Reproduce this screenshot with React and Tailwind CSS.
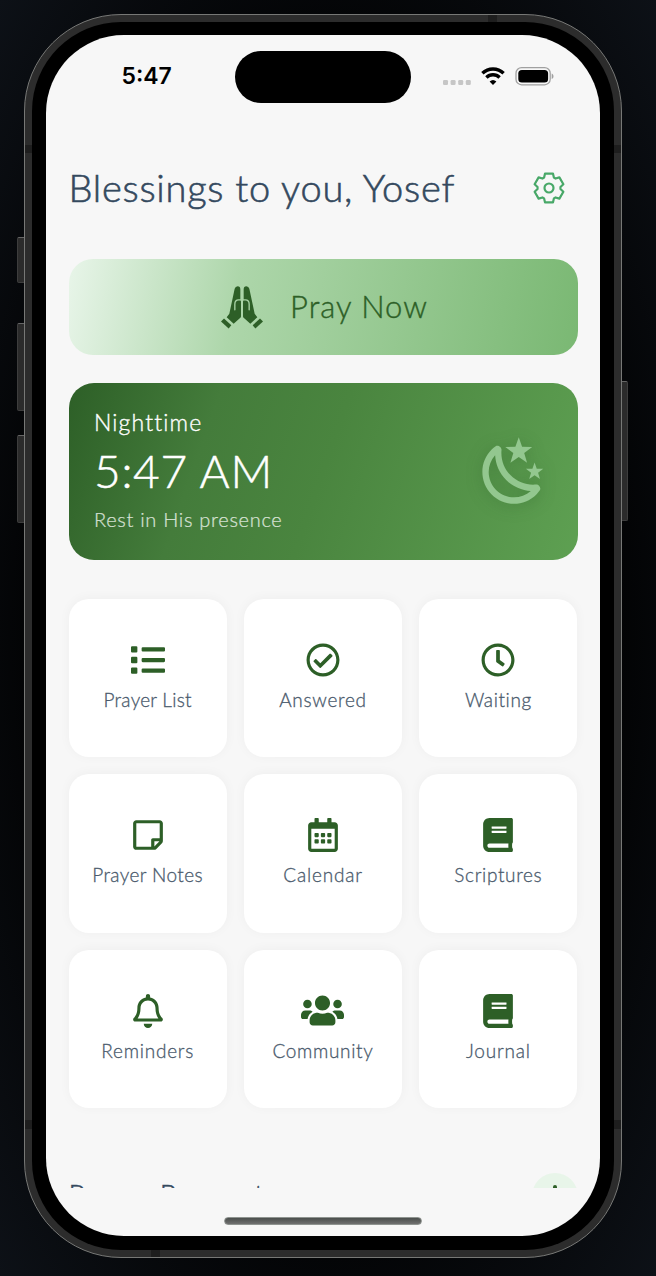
import { FaList, FaRegCheckCircle, FaRegClock, FaRegStickyNote, FaRegCalendarAlt, FaBook, FaRegBell, FaUsers } from 'react-icons/fa';

const tiles = [
  { label: 'Prayer List', Icon: FaList, tracking: 'tracking-[0.25px]' },
  { label: 'Answered', Icon: FaRegCheckCircle, tracking: 'tracking-[0.7px]' },
  { label: 'Waiting', Icon: FaRegClock, tracking: 'tracking-[0.6px]' },
  { label: 'Prayer Notes', Icon: FaRegStickyNote, tracking: 'tracking-[0.4px]' },
  { label: 'Calendar', Icon: FaRegCalendarAlt, tracking: 'tracking-[0.8px]' },
  { label: 'Scriptures', Icon: FaBook, tracking: 'tracking-[0.65px]' },
  { label: 'Reminders', Icon: FaRegBell, tracking: 'tracking-[0.75px]' },
  { label: 'Community', Icon: FaUsers, tracking: 'tracking-[0.65px]', wide: true },
  { label: 'Journal', Icon: FaBook, tracking: 'tracking-[0.8px]' },
];

const tooth = [[-4.9, -10.4], [-4, -14.3], [4, -14.3], [4.9, -10.4]];
const gearPoints = [0, 1, 2, 3, 4, 5]
  .flatMap((i) => {
    const a = (i * Math.PI) / 3;
    return tooth.map(([x, y]) => `${(x * Math.cos(a) - y * Math.sin(a)).toFixed(2)},${(x * Math.sin(a) + y * Math.cos(a)).toFixed(2)}`);
  })
  .join(' ');

function GearIcon() {
  return (
    <svg viewBox="-19 -19 38 38" className="h-[38px] w-[38px] fill-none stroke-[#48a868]" strokeWidth="2.2" strokeLinejoin="round">
      <polygon points={gearPoints} />
      <circle r="4.5" />
    </svg>
  );
}

function Hand() {
  return (
    <g>
      <path fill="currentColor" d="M41 8Q43 0 50 0Q58 0 58 9V40L60 46V90Q60 93 58 95L38 113L17 93L25 83Z" />
      <path fill="none" stroke="#a9d4a6" strokeWidth="4" strokeLinecap="round" d="M41.500 71V54Q41.500 41 53 41H62" />
      <path fill="currentColor" d="M0 106L9 97L31 117L23 127Z" />
    </g>
  );
}

function PrayIcon() {
  return (
    <svg viewBox="0 0 126 128" className="h-[43px] w-[42px]">
      <Hand />
      <g transform="translate(126 0) scale(-1 1)"><Hand /></g>
    </svg>
  );
}

function NightIcon() {
  return (
    <svg viewBox="0 0 24 24" className="h-[76px] w-[76px] fill-[#93c78f] [filter:drop-shadow(0_2px_8px_rgba(30,80,30,0.3))]">
      <path d="M17.75,4.09L15.22,6.03L16.13,9.09L13.5,7.28L10.87,9.09L11.78,6.03L9.25,4.09L12.44,4L13.5,1L14.56,4L17.75,4.09M21.25,11L19.61,12.25L20.2,14.23L18.5,13.06L16.8,14.23L17.39,12.25L15.75,11L17.81,10.95L18.5,9L19.19,10.95L21.25,11M18.97,15.95C19.8,15.87 20.69,17.05 20.16,17.8C19.84,18.25 19.5,18.67 19.08,19.07C15.17,23 8.84,23 4.94,19.07C1.03,15.17 1.03,8.83 4.94,4.93C5.34,4.53 5.76,4.17 6.21,3.85C6.96,3.32 8.14,4.21 8.06,5.04C7.79,7.9 8.75,10.87 10.95,13.06C13.14,15.26 16.1,16.22 18.97,15.95M17.33,17.97C14.5,17.81 11.7,16.64 9.53,14.5C7.36,12.31 6.2,9.5 6.04,6.68C3.23,9.82 3.34,14.64 6.35,17.66C9.37,20.67 14.19,20.78 17.33,17.97Z" />
    </svg>
  );
}

function StatusBar() {
  return (
    <div className="flex h-[84px] shrink-0 items-start">
      <div className="w-[189px] pl-[75.500px] pt-[26px] font-['Inter'] text-[23px] leading-[30px] font-semibold text-black">5:47</div>
      <div className="mt-[16px] h-[52px] w-[176px] rounded-full bg-black" />
      <div className="ml-[32px] mt-[30px] flex h-[22px] items-center">
        <svg width="28" height="22" viewBox="0 0 28 22" fill="#c6c6c6">
          <rect x="0" y="15" width="5" height="5" rx="1.3" />
          <rect x="7.6" y="15" width="5" height="5" rx="1.3" />
          <rect x="15.2" y="15" width="5" height="5" rx="1.3" />
          <rect x="22.8" y="15" width="5" height="5" rx="1.3" />
        </svg>
        <svg className="ml-[10px]" width="24" height="22" viewBox="0 0 24 22" fill="none" stroke="#000" strokeWidth="3.4">
          <path d="M1.4 8.300a15.2 15.2 0 0 1 21.2 0" />
          <path d="M5.4 12.500a9.4 9.4 0 0 1 13.2 0" />
          <path d="M12 20l-3.4-3.5a5 5 0 0 1 6.8 0z" fill="#000" stroke="none" />
        </svg>
        <svg className="ml-[10px]" width="40" height="22" viewBox="0 0 40 22">
          <rect x="1" y="2.6" width="34.2" height="17.2" rx="5.6" fill="none" stroke="#a0a0a0" strokeWidth="1.3" />
          <rect x="3.3" y="4.9" width="29.8" height="12.7" rx="3.6" fill="#000" />
          <path d="M36.7 8.5c2.4 1 2.4 4.6 0 5.6z" fill="#a0a0a0" />
        </svg>
      </div>
    </div>
  );
}

export default function App() {
  return (
    <div className="relative flex h-[1276px] w-[656px] overflow-hidden bg-[radial-gradient(ellipse_at_center,#000_55%,#0d1117_100%)] pl-[24px] pt-[14px] font-['Lato',sans-serif] font-light">
      <div className="absolute left-[17px] top-[237px] h-[46px] w-[9px] rounded-l-[2px] border border-[#3d3d3d] border-t-[#666] bg-[#2b2b2b]" />
      <div className="absolute left-[17px] top-[323px] h-[88px] w-[9px] rounded-l-[2px] border border-[#3d3d3d] border-t-[#666] bg-[#2b2b2b]" />
      <div className="absolute left-[17px] top-[435px] h-[88px] w-[9px] rounded-l-[2px] border border-[#3d3d3d] border-t-[#666] bg-[#2b2b2b]" />
      <div className="absolute left-[620px] top-[381px] h-[140px] w-[8px] rounded-r-[2px] border border-[#3d3d3d] border-t-[#666] bg-[#2b2b2b]" />
      <div className="relative h-[1244px] w-[598px] rounded-[97px] border-[1.5px] border-[#777876] bg-[#2c2c2c] p-[7px]">
        <div className="absolute left-0 top-[130px] h-[8px] w-full bg-[#1e1e1e]" />
        <div className="absolute left-0 top-[1105px] h-[9px] w-full bg-[#1e1e1e]" />
        <div className="absolute left-[463px] top-0 h-[8px] w-[9px] bg-[#1e1e1e]" />
        <div className="absolute bottom-0 left-[126px] h-[8px] w-[9px] bg-[#1e1e1e]" />
        <div className="relative h-full w-full rounded-[89px] bg-black px-[14px] pt-[13px]">
          <div className="flex h-[1201px] w-[554px] flex-col overflow-hidden rounded-[78px] bg-[#f7f7f7]">
            <StatusBar />
            <div className="flex h-[1069px] shrink-0 flex-col overflow-hidden px-[22.5px]">
              <header className="mt-[40px] flex h-[58px] shrink-0 items-center justify-between pr-[9.500px]">
                <h1 className="-mt-[2px] text-[38px] leading-[58px] tracking-[0.75px] whitespace-nowrap text-[#34495e] [-webkit-text-stroke:0.6px_#34495e]">Blessings to you, Yosef</h1>
                <GearIcon />
              </header>
              <button className="mt-[42px] flex h-[96px] shrink-0 items-center justify-center rounded-[24px] bg-[linear-gradient(100deg,#e8f5e9_0%,#add6aa_33%,#7ab873_100%)] pl-[3px] text-[#2d5f27]">
                <PrayIcon />
                <span className="-mt-[3px] ml-[27px] text-[31px] leading-[40px] tracking-[1px] [-webkit-text-stroke:0.4px_#2d5f27]">Pray Now</span>
              </button>
              <section className="mt-[28px] flex h-[177px] shrink-0 items-center justify-between rounded-[25px] bg-[linear-gradient(109deg,#2d5f27_0%,#447c3b_27%,#4a853f_50%,#5ea052_100%)] pl-[25.500px] pr-[25.500px] text-white">
                <div className="-mt-[4px]">
                  <p className="text-[23px] leading-[30px] tracking-[1.15px] [-webkit-text-stroke:0.35px_#fff]">Nighttime</p>
                  <p className="mt-[6px] text-[46px] leading-[56px] tracking-[0.7px] [-webkit-text-stroke:0.5px_#fff]">5:47 AM</p>
                  <p className="mt-[7px] text-[20px] leading-[26px] tracking-[0.7px] text-white/80 [-webkit-text-stroke:0.2px_#d5e3d3]">Rest in His presence</p>
                </div>
                <NightIcon />
              </section>
              <div className="mt-[39px] grid shrink-0 grid-cols-3 gap-[17px]">
                {tiles.map(({ label, Icon, tracking, wide }) => (
                  <div key={label} className="flex h-[158.4px] flex-col items-center rounded-[20px] bg-white pt-[44px] shadow-[0_-1px_12px_rgba(0,0,0,0.04)]">
                    <div className="flex h-[34px] items-center">
                      <Icon className={wide ? 'h-[43px] w-[43px] text-[#2d5f27]' : 'h-[34px] w-[34px] text-[#2d5f27]'} />
                    </div>
                    <span className={`mt-[11px] text-[19px] leading-[24px] whitespace-nowrap text-[#4a5a6c] [-webkit-text-stroke:0.3px_#4a5a6c] ${tracking}`}>{label}</span>
                  </div>
                ))}
              </div>
              <div className="mt-[64.500px] flex h-[46px] shrink-0 items-start justify-between">
                <h2 className="pt-[4px] text-[28px] leading-[34px] tracking-[1.05px] text-[#34495e] [-webkit-text-stroke:0.5px_#34495e]">Prayer Requests</h2>
                <div className="flex h-[46px] w-[46px] items-center justify-center rounded-full bg-[#e8f5e9]">
                  <svg width="24" height="24" viewBox="0 0 24 24" stroke="#2d5f27" strokeWidth="4" strokeLinecap="round">
                    <path d="M12 3v18M3 12h18" />
                  </svg>
                </div>
              </div>
            </div>
            <div className="mx-auto mt-[29px] h-[8px] w-[198px] rounded-full border border-[#8f9490] bg-linear-to-b from-[#4b4f4c] to-[#707070]" />
          </div>
        </div>
      </div>
    </div>
  );
}
